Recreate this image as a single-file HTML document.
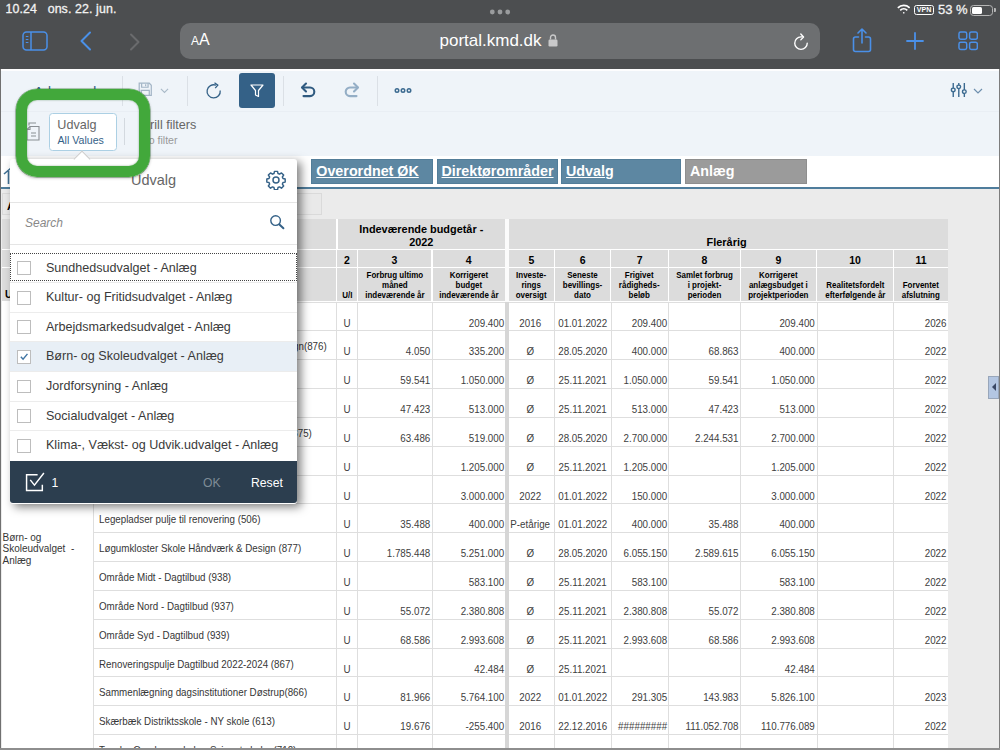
<!DOCTYPE html>
<html lang="da">
<head>
<meta charset="utf-8">
<title>portal.kmd.dk</title>
<style>
*{box-sizing:border-box;margin:0;padding:0}
html,body{width:1000px;height:750px;overflow:hidden;background:#ebebeb;font-family:"Liberation Sans",Arial,sans-serif}
#root{position:relative;width:1000px;height:750px;overflow:hidden;background:#ebebeb}
.abs{position:absolute}
/* browser chrome */
#chrome{position:absolute;left:0;top:0;width:1000px;height:69px;background:#4c4e50;color:#fff}
#status{position:absolute;left:5.5px;top:2px;font-size:12.4px;color:#f2f2f2;letter-spacing:.1px;-webkit-text-stroke:.3px #f2f2f2}
#url{position:absolute;left:180px;top:23px;width:640px;height:36px;border-radius:10px;background:#6d6f71}
#url .aa{position:absolute;left:11px;top:8px;color:#fff;font-size:16px}
#url .aa small{font-size:12px}
#url .host{position:absolute;left:259.5px;top:8.2px;color:#fff;font-size:17px}
/* toolbars */
#tb1{position:absolute;left:0;top:69px;width:1000px;height:43px;background:#eff4f9;border-bottom:1px solid #e9eef4}
#tb2{position:absolute;left:0;top:112px;width:1000px;height:46px;background:#eff4f9}
#white{position:absolute;left:0;top:156px;width:1000px;height:32px;background:#fff}
#blueline{position:absolute;left:0;top:187px;width:1000px;height:2.1px;background:#4f7d9c}
.tab{position:absolute;top:159.2px;height:25px;border:1px solid #527d99;background:#5d87a2;color:#fff;font-weight:bold;font-size:14.3px;line-height:23px;padding-left:4px;text-decoration:underline;white-space:nowrap}
.tab.g{background:#9b9b9b;border-color:#8e8e8e;text-decoration:none}
.vsep{position:absolute;width:1px;background:#dbe0e6}
/* table */
.hd{position:absolute;background:#dcdcdc;color:#000;font-weight:bold;text-align:center;font-size:8.3px;line-height:9.8px;display:flex;align-items:flex-end;justify-content:center;padding-bottom:0.6px}
.hd .lx{display:block;transform:scaleX(.96);transform-origin:center}
.hd.big{font-size:10.9px;line-height:12.5px;align-items:flex-end;padding-bottom:1.2px}
.hd.n{font-size:10.5px;align-items:center;padding-bottom:0;padding-top:4.4px}
.c{position:absolute;height:28.83px;background:#fff;border-top:1px solid #dedede;border-left:1px solid #dedede;font-size:10.3px;color:#404040;white-space:nowrap;overflow:hidden}
.c span{position:absolute;bottom:1.9px;left:0;right:1.5px}
.c span{transform:scaleX(.95);transform-origin:left bottom}
.c.ar span{text-align:right;transform-origin:right bottom}
.c.ac span{text-align:center;right:0;transform-origin:center bottom}
.c.al span{text-align:left;left:5px}
.c.nm span{bottom:6.9px;color:#363636}
/* popup */
#pop{position:absolute;left:10px;top:159px;width:287px;height:344.5px;background:#fff;box-shadow:4px 3px 10px rgba(0,0,0,.5);border-radius:3px;font-family:"Liberation Sans",sans-serif}
#pop .title{position:absolute;left:0;top:0;width:287px;height:44px;border-bottom:1px solid #e5e5e5;text-align:center;line-height:42px;font-size:14.5px;color:#666}
#pop .search{position:absolute;left:0;top:44px;width:287px;height:42px;border-bottom:1px solid #e5e5e5}
#pop .search span{position:absolute;left:15px;top:12.5px;font-style:italic;font-size:12px;color:#888}
.it{position:absolute;left:0;width:287px;height:29.64px;border-bottom:1px solid #ececec;font-size:12.55px;color:#3a3a3a;line-height:29.3px;padding-left:36px;white-space:nowrap}
.it i{position:absolute;left:7.4px;top:7.6px;width:13.8px;height:13.8px;border:1.2px solid #bdbdbd;background:#fff}
.it.sel{background:#e8eff6}
#foot{position:absolute;left:0;top:301.9px;width:287px;height:42.6px;background:#2c3e4f;border-radius:0 0 3px 3px;color:#fff;font-size:12.2px}
</style>
</head>
<body>
<div id="root">

<!-- ===== page content (SAP toolbar) ===== -->
<div id="tb1"></div>
<div id="tb2"></div>
<div id="white"></div>
<div id="blueline"></div>

<!-- tabs -->
<div class="tab" style="left:311.3px;width:121.3px">Overordnet ØK</div>
<div class="tab" style="left:436.5px;width:121px">Direktørområder</div>
<div class="tab" style="left:561px;width:120px">Udvalg</div>
<div class="tab g" style="left:685px;width:122px">Anlæg</div>

<!-- TABLE -->
<div id="table">
<div class="abs" style="left:2px;top:219px;width:946.4px;height:531px;background:#fff"></div>
<div class="hd " style="left:2px;top:219.3px;width:334.3px;height:29.9px;"></div>
<div class="hd big" style="left:337.5px;top:219.3px;width:167.5px;height:29.9px;">Indeværende budgetår -<br>2022</div>
<div class="hd big" style="left:508.8px;top:219.3px;width:439.6px;height:29.9px;padding-right:4px;">Flerårig</div>
<div class="hd n" style="left:2px;top:250.2px;width:90.0px;height:17.2px;"></div>
<div class="hd n" style="left:93px;top:250.2px;width:243.3px;height:17.2px;"></div>
<div class="hd " style="left:2px;top:268.4px;width:90.0px;height:32.8px;"><span style="position:absolute;left:3px;bottom:1px;font-size:10px">Udvalg</span></div>
<div class="hd " style="left:93px;top:268.4px;width:243.3px;height:32.8px;"></div>
<div class="hd n" style="left:337.3px;top:250.2px;width:19.3px;height:17.2px;">2</div>
<div class="hd " style="left:337.3px;top:268.4px;width:19.3px;height:32.8px;"><span class="lx">U/I</span></div>
<div class="hd n" style="left:357.6px;top:250.2px;width:73.9px;height:17.2px;">3</div>
<div class="hd " style="left:357.6px;top:268.4px;width:73.9px;height:32.8px;"><span class="lx">Forbrug ultimo<br>måned<br>indeværende år</span></div>
<div class="hd n" style="left:432.5px;top:250.2px;width:72.5px;height:17.2px;">4</div>
<div class="hd " style="left:432.5px;top:268.4px;width:72.5px;height:32.8px;"><span class="lx">Korrigeret<br>budget<br>indeværende år</span></div>
<div class="hd n" style="left:508.8px;top:250.2px;width:45.1px;height:17.2px;">5</div>
<div class="hd " style="left:508.8px;top:268.4px;width:45.1px;height:32.8px;"><span class="lx">Investe-<br>rings<br>oversigt</span></div>
<div class="hd n" style="left:554.9px;top:250.2px;width:55.4px;height:17.2px;">6</div>
<div class="hd " style="left:554.9px;top:268.4px;width:55.4px;height:32.8px;"><span class="lx">Seneste<br>bevillings-<br>dato</span></div>
<div class="hd n" style="left:611.3px;top:250.2px;width:56.6px;height:17.2px;">7</div>
<div class="hd " style="left:611.3px;top:268.4px;width:56.6px;height:32.8px;"><span class="lx">Frigivet<br>rådigheds-<br>beløb</span></div>
<div class="hd n" style="left:668.9px;top:250.2px;width:71.0px;height:17.2px;">8</div>
<div class="hd " style="left:668.9px;top:268.4px;width:71.0px;height:32.8px;"><span class="lx">Samlet forbrug<br>i projekt-<br>perioden</span></div>
<div class="hd n" style="left:740.9px;top:250.2px;width:75.3px;height:17.2px;">9</div>
<div class="hd " style="left:740.9px;top:268.4px;width:75.3px;height:32.8px;"><span class="lx">Korrigeret<br>anlægsbudget i<br>projektperioden</span></div>
<div class="hd n" style="left:817.2px;top:250.2px;width:75.7px;height:17.2px;">10</div>
<div class="hd " style="left:817.2px;top:268.4px;width:75.7px;height:32.8px;"><span class="lx">Realitetsfordelt<br>efterfølgende år</span></div>
<div class="hd n" style="left:893.9px;top:250.2px;width:54.5px;height:17.2px;">11</div>
<div class="hd " style="left:893.9px;top:268.4px;width:54.5px;height:32.8px;"><span class="lx">Forventet<br>afslutning</span></div>
<div class="abs" style="left:2px;top:193px;width:320px;height:22px;background:#e9e9e9;border:1px solid #dadada;font-weight:bold;font-size:11px;line-height:24px;padding-left:4px;color:#000">Anlæg</div>
<div class="abs" style="left:2px;top:302px;width:91px;height:448px;background:#fff"></div>
<div class="abs" style="left:2.5px;top:531.5px;width:90px;font-size:10px;line-height:11.9px;color:#363636">Børn- og<br>Skoleudvalget&nbsp; -<br>Anlæg</div>
<div class="c al nm" style="left:93px;top:301.6px;width:243.5px"><span></span></div>
<div class="c ac" style="left:336px;top:301.6px;width:21px"><span>U</span></div>
<div class="c ar" style="left:357px;top:301.6px;width:74.80000000000001px"><span></span></div>
<div class="c ar" style="left:431.8px;top:301.6px;width:73.69999999999999px"><span>209.400</span></div>
<div class="c ac" style="left:505px;top:301.6px;width:49.39999999999998px"><span>2016</span></div>
<div class="c ac" style="left:554.4px;top:301.6px;width:56.39999999999998px"><span>01.01.2022</span></div>
<div class="c ar" style="left:610.8px;top:301.6px;width:57.60000000000002px"><span>209.400</span></div>
<div class="c ar" style="left:668.4px;top:301.6px;width:72.0px"><span></span></div>
<div class="c ar" style="left:740.4px;top:301.6px;width:76.30000000000007px"><span>209.400</span></div>
<div class="c ar" style="left:816.7px;top:301.6px;width:76.69999999999993px"><span></span></div>
<div class="c ar" style="left:893.4px;top:301.6px;width:55.0px"><span>2026</span></div>
<div class="c al nm" style="left:93px;top:330.4px;width:243.5px"><span></span><span style="left:auto;right:8.3px;text-align:right">gn(876)</span></div>
<div class="c ac" style="left:336px;top:330.4px;width:21px"><span>U</span></div>
<div class="c ar" style="left:357px;top:330.4px;width:74.80000000000001px"><span>4.050</span></div>
<div class="c ar" style="left:431.8px;top:330.4px;width:73.69999999999999px"><span>335.200</span></div>
<div class="c ac" style="left:505px;top:330.4px;width:49.39999999999998px"><span>Ø</span></div>
<div class="c ac" style="left:554.4px;top:330.4px;width:56.39999999999998px"><span>28.05.2020</span></div>
<div class="c ar" style="left:610.8px;top:330.4px;width:57.60000000000002px"><span>400.000</span></div>
<div class="c ar" style="left:668.4px;top:330.4px;width:72.0px"><span>68.863</span></div>
<div class="c ar" style="left:740.4px;top:330.4px;width:76.30000000000007px"><span>400.000</span></div>
<div class="c ar" style="left:816.7px;top:330.4px;width:76.69999999999993px"><span></span></div>
<div class="c ar" style="left:893.4px;top:330.4px;width:55.0px"><span>2022</span></div>
<div class="c al nm" style="left:93px;top:359.3px;width:243.5px"><span></span></div>
<div class="c ac" style="left:336px;top:359.3px;width:21px"><span>U</span></div>
<div class="c ar" style="left:357px;top:359.3px;width:74.80000000000001px"><span>59.541</span></div>
<div class="c ar" style="left:431.8px;top:359.3px;width:73.69999999999999px"><span>1.050.000</span></div>
<div class="c ac" style="left:505px;top:359.3px;width:49.39999999999998px"><span>Ø</span></div>
<div class="c ac" style="left:554.4px;top:359.3px;width:56.39999999999998px"><span>25.11.2021</span></div>
<div class="c ar" style="left:610.8px;top:359.3px;width:57.60000000000002px"><span>1.050.000</span></div>
<div class="c ar" style="left:668.4px;top:359.3px;width:72.0px"><span>59.541</span></div>
<div class="c ar" style="left:740.4px;top:359.3px;width:76.30000000000007px"><span>1.050.000</span></div>
<div class="c ar" style="left:816.7px;top:359.3px;width:76.69999999999993px"><span></span></div>
<div class="c ar" style="left:893.4px;top:359.3px;width:55.0px"><span>2022</span></div>
<div class="c al nm" style="left:93px;top:388.1px;width:243.5px"><span></span></div>
<div class="c ac" style="left:336px;top:388.1px;width:21px"><span>U</span></div>
<div class="c ar" style="left:357px;top:388.1px;width:74.80000000000001px"><span>47.423</span></div>
<div class="c ar" style="left:431.8px;top:388.1px;width:73.69999999999999px"><span>513.000</span></div>
<div class="c ac" style="left:505px;top:388.1px;width:49.39999999999998px"><span>Ø</span></div>
<div class="c ac" style="left:554.4px;top:388.1px;width:56.39999999999998px"><span>25.11.2021</span></div>
<div class="c ar" style="left:610.8px;top:388.1px;width:57.60000000000002px"><span>513.000</span></div>
<div class="c ar" style="left:668.4px;top:388.1px;width:72.0px"><span>47.423</span></div>
<div class="c ar" style="left:740.4px;top:388.1px;width:76.30000000000007px"><span>513.000</span></div>
<div class="c ar" style="left:816.7px;top:388.1px;width:76.69999999999993px"><span></span></div>
<div class="c ar" style="left:893.4px;top:388.1px;width:55.0px"><span>2022</span></div>
<div class="c al nm" style="left:93px;top:416.9px;width:243.5px"><span></span><span style="left:auto;right:23.6px;text-align:right">(875)</span></div>
<div class="c ac" style="left:336px;top:416.9px;width:21px"><span>U</span></div>
<div class="c ar" style="left:357px;top:416.9px;width:74.80000000000001px"><span>63.486</span></div>
<div class="c ar" style="left:431.8px;top:416.9px;width:73.69999999999999px"><span>519.000</span></div>
<div class="c ac" style="left:505px;top:416.9px;width:49.39999999999998px"><span>Ø</span></div>
<div class="c ac" style="left:554.4px;top:416.9px;width:56.39999999999998px"><span>28.05.2020</span></div>
<div class="c ar" style="left:610.8px;top:416.9px;width:57.60000000000002px"><span>2.700.000</span></div>
<div class="c ar" style="left:668.4px;top:416.9px;width:72.0px"><span>2.244.531</span></div>
<div class="c ar" style="left:740.4px;top:416.9px;width:76.30000000000007px"><span>2.700.000</span></div>
<div class="c ar" style="left:816.7px;top:416.9px;width:76.69999999999993px"><span></span></div>
<div class="c ar" style="left:893.4px;top:416.9px;width:55.0px"><span>2022</span></div>
<div class="c al nm" style="left:93px;top:445.8px;width:243.5px"><span></span></div>
<div class="c ac" style="left:336px;top:445.8px;width:21px"><span>U</span></div>
<div class="c ar" style="left:357px;top:445.8px;width:74.80000000000001px"><span></span></div>
<div class="c ar" style="left:431.8px;top:445.8px;width:73.69999999999999px"><span>1.205.000</span></div>
<div class="c ac" style="left:505px;top:445.8px;width:49.39999999999998px"><span>Ø</span></div>
<div class="c ac" style="left:554.4px;top:445.8px;width:56.39999999999998px"><span>25.11.2021</span></div>
<div class="c ar" style="left:610.8px;top:445.8px;width:57.60000000000002px"><span>1.205.000</span></div>
<div class="c ar" style="left:668.4px;top:445.8px;width:72.0px"><span></span></div>
<div class="c ar" style="left:740.4px;top:445.8px;width:76.30000000000007px"><span>1.205.000</span></div>
<div class="c ar" style="left:816.7px;top:445.8px;width:76.69999999999993px"><span></span></div>
<div class="c ar" style="left:893.4px;top:445.8px;width:55.0px"><span>2022</span></div>
<div class="c al nm" style="left:93px;top:474.6px;width:243.5px"><span></span></div>
<div class="c ac" style="left:336px;top:474.6px;width:21px"><span>U</span></div>
<div class="c ar" style="left:357px;top:474.6px;width:74.80000000000001px"><span></span></div>
<div class="c ar" style="left:431.8px;top:474.6px;width:73.69999999999999px"><span>3.000.000</span></div>
<div class="c ac" style="left:505px;top:474.6px;width:49.39999999999998px"><span>2022</span></div>
<div class="c ac" style="left:554.4px;top:474.6px;width:56.39999999999998px"><span>01.01.2022</span></div>
<div class="c ar" style="left:610.8px;top:474.6px;width:57.60000000000002px"><span>150.000</span></div>
<div class="c ar" style="left:668.4px;top:474.6px;width:72.0px"><span></span></div>
<div class="c ar" style="left:740.4px;top:474.6px;width:76.30000000000007px"><span>3.000.000</span></div>
<div class="c ar" style="left:816.7px;top:474.6px;width:76.69999999999993px"><span></span></div>
<div class="c ar" style="left:893.4px;top:474.6px;width:55.0px"><span>2022</span></div>
<div class="c al nm" style="left:93px;top:503.4px;width:243.5px"><span>Legepladser pulje til renovering (506)</span></div>
<div class="c ac" style="left:336px;top:503.4px;width:21px"><span>U</span></div>
<div class="c ar" style="left:357px;top:503.4px;width:74.80000000000001px"><span>35.488</span></div>
<div class="c ar" style="left:431.8px;top:503.4px;width:73.69999999999999px"><span>400.000</span></div>
<div class="c ac" style="left:505px;top:503.4px;width:49.39999999999998px"><span>P-etårige</span></div>
<div class="c ac" style="left:554.4px;top:503.4px;width:56.39999999999998px"><span>01.01.2022</span></div>
<div class="c ar" style="left:610.8px;top:503.4px;width:57.60000000000002px"><span>400.000</span></div>
<div class="c ar" style="left:668.4px;top:503.4px;width:72.0px"><span>35.488</span></div>
<div class="c ar" style="left:740.4px;top:503.4px;width:76.30000000000007px"><span>400.000</span></div>
<div class="c ar" style="left:816.7px;top:503.4px;width:76.69999999999993px"><span></span></div>
<div class="c ar" style="left:893.4px;top:503.4px;width:55.0px"><span></span></div>
<div class="c al nm" style="left:93px;top:532.2px;width:243.5px"><span>Løgumkloster Skole Håndværk &amp; Design (877)</span></div>
<div class="c ac" style="left:336px;top:532.2px;width:21px"><span>U</span></div>
<div class="c ar" style="left:357px;top:532.2px;width:74.80000000000001px"><span>1.785.448</span></div>
<div class="c ar" style="left:431.8px;top:532.2px;width:73.69999999999999px"><span>5.251.000</span></div>
<div class="c ac" style="left:505px;top:532.2px;width:49.39999999999998px"><span>Ø</span></div>
<div class="c ac" style="left:554.4px;top:532.2px;width:56.39999999999998px"><span>28.05.2020</span></div>
<div class="c ar" style="left:610.8px;top:532.2px;width:57.60000000000002px"><span>6.055.150</span></div>
<div class="c ar" style="left:668.4px;top:532.2px;width:72.0px"><span>2.589.615</span></div>
<div class="c ar" style="left:740.4px;top:532.2px;width:76.30000000000007px"><span>6.055.150</span></div>
<div class="c ar" style="left:816.7px;top:532.2px;width:76.69999999999993px"><span></span></div>
<div class="c ar" style="left:893.4px;top:532.2px;width:55.0px"><span>2022</span></div>
<div class="c al nm" style="left:93px;top:561.1px;width:243.5px"><span>Område Midt - Dagtilbud (938)</span></div>
<div class="c ac" style="left:336px;top:561.1px;width:21px"><span>U</span></div>
<div class="c ar" style="left:357px;top:561.1px;width:74.80000000000001px"><span></span></div>
<div class="c ar" style="left:431.8px;top:561.1px;width:73.69999999999999px"><span>583.100</span></div>
<div class="c ac" style="left:505px;top:561.1px;width:49.39999999999998px"><span>Ø</span></div>
<div class="c ac" style="left:554.4px;top:561.1px;width:56.39999999999998px"><span>25.11.2021</span></div>
<div class="c ar" style="left:610.8px;top:561.1px;width:57.60000000000002px"><span>583.100</span></div>
<div class="c ar" style="left:668.4px;top:561.1px;width:72.0px"><span></span></div>
<div class="c ar" style="left:740.4px;top:561.1px;width:76.30000000000007px"><span>583.100</span></div>
<div class="c ar" style="left:816.7px;top:561.1px;width:76.69999999999993px"><span></span></div>
<div class="c ar" style="left:893.4px;top:561.1px;width:55.0px"><span>2022</span></div>
<div class="c al nm" style="left:93px;top:589.9px;width:243.5px"><span>Område Nord - Dagtilbud (937)</span></div>
<div class="c ac" style="left:336px;top:589.9px;width:21px"><span>U</span></div>
<div class="c ar" style="left:357px;top:589.9px;width:74.80000000000001px"><span>55.072</span></div>
<div class="c ar" style="left:431.8px;top:589.9px;width:73.69999999999999px"><span>2.380.808</span></div>
<div class="c ac" style="left:505px;top:589.9px;width:49.39999999999998px"><span>Ø</span></div>
<div class="c ac" style="left:554.4px;top:589.9px;width:56.39999999999998px"><span>25.11.2021</span></div>
<div class="c ar" style="left:610.8px;top:589.9px;width:57.60000000000002px"><span>2.380.808</span></div>
<div class="c ar" style="left:668.4px;top:589.9px;width:72.0px"><span>55.072</span></div>
<div class="c ar" style="left:740.4px;top:589.9px;width:76.30000000000007px"><span>2.380.808</span></div>
<div class="c ar" style="left:816.7px;top:589.9px;width:76.69999999999993px"><span></span></div>
<div class="c ar" style="left:893.4px;top:589.9px;width:55.0px"><span>2022</span></div>
<div class="c al nm" style="left:93px;top:618.7px;width:243.5px"><span>Område Syd - Dagtilbud (939)</span></div>
<div class="c ac" style="left:336px;top:618.7px;width:21px"><span>U</span></div>
<div class="c ar" style="left:357px;top:618.7px;width:74.80000000000001px"><span>68.586</span></div>
<div class="c ar" style="left:431.8px;top:618.7px;width:73.69999999999999px"><span>2.993.608</span></div>
<div class="c ac" style="left:505px;top:618.7px;width:49.39999999999998px"><span>Ø</span></div>
<div class="c ac" style="left:554.4px;top:618.7px;width:56.39999999999998px"><span>25.11.2021</span></div>
<div class="c ar" style="left:610.8px;top:618.7px;width:57.60000000000002px"><span>2.993.608</span></div>
<div class="c ar" style="left:668.4px;top:618.7px;width:72.0px"><span>68.586</span></div>
<div class="c ar" style="left:740.4px;top:618.7px;width:76.30000000000007px"><span>2.993.608</span></div>
<div class="c ar" style="left:816.7px;top:618.7px;width:76.69999999999993px"><span></span></div>
<div class="c ar" style="left:893.4px;top:618.7px;width:55.0px"><span>2022</span></div>
<div class="c al nm" style="left:93px;top:647.6px;width:243.5px"><span>Renoveringspulje Dagtilbud 2022-2024 (867)</span></div>
<div class="c ac" style="left:336px;top:647.6px;width:21px"><span>U</span></div>
<div class="c ar" style="left:357px;top:647.6px;width:74.80000000000001px"><span></span></div>
<div class="c ar" style="left:431.8px;top:647.6px;width:73.69999999999999px"><span>42.484</span></div>
<div class="c ac" style="left:505px;top:647.6px;width:49.39999999999998px"><span>Ø</span></div>
<div class="c ac" style="left:554.4px;top:647.6px;width:56.39999999999998px"><span>25.11.2021</span></div>
<div class="c ar" style="left:610.8px;top:647.6px;width:57.60000000000002px"><span></span></div>
<div class="c ar" style="left:668.4px;top:647.6px;width:72.0px"><span></span></div>
<div class="c ar" style="left:740.4px;top:647.6px;width:76.30000000000007px"><span>42.484</span></div>
<div class="c ar" style="left:816.7px;top:647.6px;width:76.69999999999993px"><span></span></div>
<div class="c ar" style="left:893.4px;top:647.6px;width:55.0px"><span></span></div>
<div class="c al nm" style="left:93px;top:676.4px;width:243.5px"><span>Sammenlægning dagsinstitutioner Døstrup(866)</span></div>
<div class="c ac" style="left:336px;top:676.4px;width:21px"><span>U</span></div>
<div class="c ar" style="left:357px;top:676.4px;width:74.80000000000001px"><span>81.966</span></div>
<div class="c ar" style="left:431.8px;top:676.4px;width:73.69999999999999px"><span>5.764.100</span></div>
<div class="c ac" style="left:505px;top:676.4px;width:49.39999999999998px"><span>2022</span></div>
<div class="c ac" style="left:554.4px;top:676.4px;width:56.39999999999998px"><span>01.01.2022</span></div>
<div class="c ar" style="left:610.8px;top:676.4px;width:57.60000000000002px"><span>291.305</span></div>
<div class="c ar" style="left:668.4px;top:676.4px;width:72.0px"><span>143.983</span></div>
<div class="c ar" style="left:740.4px;top:676.4px;width:76.30000000000007px"><span>5.826.100</span></div>
<div class="c ar" style="left:816.7px;top:676.4px;width:76.69999999999993px"><span></span></div>
<div class="c ar" style="left:893.4px;top:676.4px;width:55.0px"><span>2023</span></div>
<div class="c al nm" style="left:93px;top:705.2px;width:243.5px"><span>Skærbæk Distriktsskole - NY skole (613)</span></div>
<div class="c ac" style="left:336px;top:705.2px;width:21px"><span>U</span></div>
<div class="c ar" style="left:357px;top:705.2px;width:74.80000000000001px"><span>19.676</span></div>
<div class="c ar" style="left:431.8px;top:705.2px;width:73.69999999999999px"><span>-255.400</span></div>
<div class="c ac" style="left:505px;top:705.2px;width:49.39999999999998px"><span>2016</span></div>
<div class="c ac" style="left:554.4px;top:705.2px;width:56.39999999999998px"><span>22.12.2016</span></div>
<div class="c ar" style="left:610.8px;top:705.2px;width:57.60000000000002px"><span>#########</span></div>
<div class="c ar" style="left:668.4px;top:705.2px;width:72.0px"><span>111.052.708</span></div>
<div class="c ar" style="left:740.4px;top:705.2px;width:76.30000000000007px"><span>110.776.089</span></div>
<div class="c ar" style="left:816.7px;top:705.2px;width:76.69999999999993px"><span></span></div>
<div class="c ar" style="left:893.4px;top:705.2px;width:55.0px"><span>2022</span></div>
<div class="c al nm" style="left:93px;top:734.0px;width:243.5px"><span>Tønder Overbygn.skole - Svinget skolen(712)</span></div>
<div class="c ac" style="left:336px;top:734.0px;width:21px"><span></span></div>
<div class="c ar" style="left:357px;top:734.0px;width:74.80000000000001px"><span></span></div>
<div class="c ar" style="left:431.8px;top:734.0px;width:73.69999999999999px"><span></span></div>
<div class="c ac" style="left:505px;top:734.0px;width:49.39999999999998px"><span></span></div>
<div class="c ac" style="left:554.4px;top:734.0px;width:56.39999999999998px"><span></span></div>
<div class="c ar" style="left:610.8px;top:734.0px;width:57.60000000000002px"><span></span></div>
<div class="c ar" style="left:668.4px;top:734.0px;width:72.0px"><span></span></div>
<div class="c ar" style="left:740.4px;top:734.0px;width:76.30000000000007px"><span></span></div>
<div class="c ar" style="left:816.7px;top:734.0px;width:76.69999999999993px"><span></span></div>
<div class="c ar" style="left:893.4px;top:734.0px;width:55.0px"><span></span></div>
<div class="abs" style="left:505.3px;top:219px;width:3.5px;height:531px;background:#d6d6d6"></div>
<div class="abs" style="left:505.3px;top:219px;width:3.5px;height:83px;background:#fbfbfb"></div>
<div class="abs" style="left:948.3px;top:219px;width:51px;height:531px;background:#ebebeb"></div>
<div class="abs" style="left:988px;top:375.5px;width:11px;height:23px;background:#b3c6e2;border:1px solid #98a6ba"></div><div class="abs" style="left:991.5px;top:383px;width:0;height:0;border-top:4px solid transparent;border-bottom:4px solid transparent;border-right:4.5px solid #3a4865"></div>
</div>

<!-- right scrollbar-ish area -->


<!-- ===== toolbar icons ===== -->
<div class="abs" style="left:0;top:69px;width:1000px;height:1.6px;background:#fdfdfe"></div>
<div class="abs" style="left:34px;top:84px;font-size:14px;color:#346187;white-space:nowrap">Advanced ‹</div>
<div class="vsep" style="left:122px;top:76px;height:30px"></div>
<!-- save icon -->
<svg class="abs" style="left:137.5px;top:82.3px" width="14.5" height="14.5" viewBox="0 0 18 18" fill="none" stroke="#a3b5c6" stroke-width="1.5"><path d="M1.5 1.5h12.5l2.500 2.500v12.500h-15z"/><path d="M4.500 1.500v5h8v-5"/><path d="M9.500 2.800v2.400"/><path d="M4 16.500v-6h10v6"/></svg>
<svg class="abs" style="left:159.5px;top:88px" width="9" height="6.3" viewBox="0 0 10 7" fill="none" stroke="#a9b9c8" stroke-width="1.2"><path d="M1 1l4 4 4-4"/></svg>
<div class="vsep" style="left:187px;top:76px;height:30px"></div>
<!-- refresh -->
<svg class="abs" style="left:204.6px;top:81.6px" width="18" height="19" viewBox="0 0 18 19" fill="none" stroke="#346187" stroke-width="1.3"><path d="M15.200 8.500a6.600 6.600 0 1 1-4.200-5.300"/><path d="M9.500 0.800l3.300 2.400-2.600 2.900" /></svg>
<!-- filter button -->
<div class="abs" style="left:239px;top:73px;width:36px;height:35px;background:#346187;border-radius:3px"></div>
<svg class="abs" style="left:249px;top:83px" width="16" height="16" viewBox="0 0 16 16" fill="none" stroke="#fff" stroke-width="1.2" stroke-linejoin="round"><path d="M2 2h12l-4.500 5.500v6l-3-1.500v-4.500z"/></svg>
<div class="vsep" style="left:283px;top:76px;height:30px"></div>
<!-- undo -->
<svg class="abs" style="left:300px;top:82px" width="17" height="16" viewBox="0 0 17 16" fill="none" stroke="#2f5a80" stroke-width="2.1" stroke-linecap="round" stroke-linejoin="round"><path d="M6 1.500l-4 4 4 4"/><path d="M2.500 5.500h7.500a4.300 4.300 0 0 1 0 8.600h-6.500"/></svg>
<!-- redo -->
<svg class="abs" style="left:343px;top:82px" width="17" height="16" viewBox="0 0 17 16" fill="none" stroke="#94aec6" stroke-width="2.1" stroke-linecap="round" stroke-linejoin="round"><path d="M11 1.500l4 4-4 4"/><path d="M14.500 5.500h-7.500a4.300 4.300 0 0 0 0 8.600h6.500"/></svg>
<div class="vsep" style="left:377px;top:76px;height:30px"></div>
<!-- more -->
<svg class="abs" style="left:394px;top:86.5px" width="18" height="7" viewBox="0 0 18 7" fill="none" stroke="#3b6a90" stroke-width="1.5"><circle cx="3" cy="3.5" r="1.75"/><circle cx="9" cy="3.5" r="1.75"/><circle cx="15" cy="3.5" r="1.75"/></svg>
<!-- settings sliders right -->
<svg class="abs" style="left:949.5px;top:81.8px" width="18.5" height="15.8" viewBox="0 0 20 18" preserveAspectRatio="none" fill="none" stroke="#3b6a90" stroke-width="1.5"><path d="M3.500 1v6M3.500 11v6M9.500 1v2.500M9.500 7.500v9.500M15.500 1v8M15.500 13v4"/><circle cx="3.500" cy="9" r="2"/><circle cx="9.500" cy="5.500" r="2"/><circle cx="15.500" cy="11" r="2"/></svg>
<svg class="abs" style="left:973px;top:87.5px" width="10" height="7" viewBox="0 0 10 7" fill="none" stroke="#6e8fae" stroke-width="1.200"><path d="M1 1l4 4 4-4"/></svg>

<!-- second toolbar -->
<svg class="abs" style="left:26px;top:122px" width="14" height="19" viewBox="0 0 14 19" fill="none" stroke="#8a8f94" stroke-width="1.100"><path d="M3 3.500v-2.500h7"/><path d="M1 7.500l3-3h9v13.500h-12z"/><path d="M4 4.500v3h-3"/><path d="M5 11h5M5 14h5"/></svg>
<div class="abs" style="left:49px;top:113px;width:68px;height:38px;background:#fff;border:1.3px solid #acd0e4;border-radius:3.5px"></div>
<div class="abs" style="left:57.3px;top:117.5px;font-size:12.6px;color:#666;white-space:nowrap">Udvalg</div>
<div class="abs" style="left:57.500px;top:134px;font-size:10.600px;color:#346187;white-space:nowrap">All Values</div>
<div class="vsep" style="left:124px;top:118px;height:27px;background:#d3d9df"></div>
<div class="abs" style="left:141px;top:117.5px;font-size:12.6px;color:#666;white-space:nowrap">Drill filters</div>
<div class="abs" style="left:141px;top:134px;font-size:10.600px;color:#999;white-space:nowrap">No filter</div>
<!-- home icon bit at left -->
<svg class="abs" style="left:3px;top:164.5px" width="10" height="20" viewBox="0 0 10 20" fill="none" stroke="#3f6f93" stroke-width="1.600"><path d="M1 9l7-6M5.500 6v13"/></svg>


<!-- ===== popup ===== -->
<div id="pop">
<!-- arrow -->
<div class="abs" style="left:66px;top:-6px;width:12px;height:12px;background:#fff;transform:rotate(45deg);border-left:1px solid #ccc;border-top:1px solid #ccc"></div>
<div class="title">Udvalg</div>
<svg class="abs" style="left:256px;top:10.8px" width="20" height="20" viewBox="0 0 22 22" fill="none" stroke="#346187" stroke-width="1.6" stroke-linejoin="round"><circle cx="11" cy="11" r="3.3"/><path d="M9.300 1.500h3.400l.5 2.400 1.700.7 2.100-1.400 2.400 2.400-1.400 2.100.7 1.700 2.400.5v3.400l-2.400.5-.7 1.700 1.400 2.100-2.400 2.400-2.100-1.400-1.700.7-.5 2.400h-3.400l-.5-2.400-1.700-.7-2.100 1.400-2.400-2.400 1.400-2.100-.7-1.700-2.400-.5v-3.400l2.400-.5.7-1.700-1.400-2.100 2.400-2.400 2.100 1.400 1.700-.7z"/></svg>
<div class="search"><span>Search</span>
<svg class="abs" style="left:259px;top:10.5px" width="17" height="17" viewBox="0 0 17 17" fill="none" stroke="#346187" stroke-width="1.4" stroke-linecap="round"><circle cx="6.6" cy="6.6" r="4.8"/><path d="M10.4 10.4l4 3.8" stroke-width="2"/></svg>
</div>
<div class="it" style="top:94.50px"><b class="abs" style="left:0;top:-0.8px;width:287px;height:27.8px;border:1px dotted #444"></b><i></i>Sundhedsudvalget - Anlæg</div>
<div class="it" style="top:124.14px"><i></i>Kultur- og Fritidsudvalget - Anlæg</div>
<div class="it" style="top:153.78px"><i></i>Arbejdsmarkedsudvalget - Anlæg</div>
<div class="it sel" style="top:183.42px"><i></i><svg class="abs" style="left:10.3px;top:10.8px" width="8.3" height="7.5" viewBox="0 0 10 9" fill="none" stroke="#3f74a3" stroke-width="1.7"><path d="M1 4.500l2.700 3 5.300-6.500"/></svg>Børn- og Skoleudvalget - Anlæg</div>
<div class="it" style="top:213.06px"><i></i>Jordforsyning - Anlæg</div>
<div class="it" style="top:242.70px"><i></i>Socialudvalget - Anlæg</div>
<div class="it" style="top:272.34px;border-bottom:none"><i></i>Klima-, Vækst- og Udvik.udvalget - Anlæg</div>
<div id="foot">
<svg class="abs" style="left:15px;top:11.5px" width="21" height="20" viewBox="0 0 20 19" fill="none" stroke="#fff" stroke-width="1.400"><path d="M12 2.500h-10.500v15h15v-5.500"/><path d="M5 7.500l4 5 9-11.500"/></svg>
<span class="abs" style="left:41.5px;top:15.5px">1</span>
<span class="abs" style="left:193px;top:15.5px;color:#7f8c97">OK</span>
<span class="abs" style="left:241px;top:15.5px">Reset</span>
</div>
</div>


<!-- ===== green highlight ===== -->
<div class="abs" style="left:16.2px;top:89px;width:133.7px;height:88px;border:11.9px solid #42a83b;border-radius:21px;box-shadow:0 1px 3px rgba(0,0,0,.3),inset 0 0 2px rgba(0,70,0,.45),0 0 0 .5px rgba(30,110,30,.6)"></div>

<!-- ===== browser chrome ===== -->
<div id="chrome">
<div id="status">10.24&nbsp;&nbsp; ons. 22. jun.</div>
<!-- center dots -->
<svg class="abs" style="left:489px;top:8.5px" width="22" height="6" viewBox="0 0 22 6"><circle cx="3.3" cy="3" r="2.4" fill="#9a9c9e"/><circle cx="11" cy="3" r="2.4" fill="#9a9c9e"/><circle cx="18.7" cy="3" r="2.4" fill="#9a9c9e"/></svg>
<!-- wifi -->
<svg class="abs" style="left:896.5px;top:4.3px" width="13.5" height="10.2" viewBox="0 0 16 12" fill="none" stroke="#fff" stroke-width="2" stroke-linecap="butt"><path d="M1 4.500a10 10 0 0 1 14 0"/><path d="M3.800 7.500a6 6 0 0 1 8.400 0"/><circle cx="8" cy="10.300" r="1" fill="#fff" stroke="none"/></svg>
<!-- vpn -->
<div class="abs" style="left:914px;top:5px;width:20px;height:10px;border:1px solid #fff;border-radius:2.500px;font-size:7px;font-weight:bold;line-height:8px;text-align:center;color:#fff">VPN</div>
<div class="abs" style="left:938px;top:2px;font-size:13px;color:#f2f2f2;white-space:nowrap;-webkit-text-stroke:.3px #f2f2f2">53 %</div>
<!-- battery -->
<div class="abs" style="left:970px;top:4.5px;width:22.5px;height:11px;border:1px solid #b5b5b5;border-radius:3.500px"></div>
<div class="abs" style="left:972px;top:6.5px;width:10px;height:7px;background:#fff;border-radius:1.500px"></div>
<div class="abs" style="left:993.5px;top:8px;width:2px;height:4px;background:#b5b5b5;border-radius:0 1px 1px 0"></div>
<!-- sidebar icon -->
<svg class="abs" style="left:22px;top:31px" width="26" height="20" viewBox="0 0 26 20" fill="none" stroke="#4a90e8" stroke-width="1.500"><rect x="1" y="1" width="24" height="18" rx="3.500"/><path d="M9 1v18"/><path d="M3.800 5.500h2.600M3.800 8.500h2.600M3.800 11.500h2.600" stroke-width="1.200"/></svg>
<!-- back / forward -->
<svg class="abs" style="left:80px;top:31px" width="12" height="20" viewBox="0 0 12 20" fill="none" stroke="#4a90e8" stroke-width="2" stroke-linecap="round" stroke-linejoin="round"><path d="M10 1.500l-8.500 8.500 8.500 8.500"/></svg>
<svg class="abs" style="left:129px;top:32.5px" width="12" height="18" viewBox="0 0 12 18" fill="none" stroke="#6a6b6d" stroke-width="2" stroke-linecap="round" stroke-linejoin="round"><path d="M2 1.500l7.500 7.500-7.500 7.500"/></svg>
<!-- url bar -->
<div id="url">
<div class="aa"><small>A</small>A</div>
<div class="host">portal.kmd.dk</div>
<svg class="abs" style="left:368px;top:11px" width="10" height="13" viewBox="0 0 10 13"><rect x="0.500" y="5.500" width="9" height="7" rx="1.200" fill="#c9c9ca"/><path d="M2.500 5.500v-2a2.500 2.500 0 0 1 5 0v2" fill="none" stroke="#c9c9ca" stroke-width="1.400"/></svg>
<svg class="abs" style="left:613px;top:9.5px" width="16.5" height="18.5" viewBox="0 0 18 20" fill="none" stroke="#fff" stroke-width="1.500" stroke-linecap="round"><path d="M15.500 11a6.800 6.800 0 1 1-6.800-6.800h2"/><path d="M8.500 1l3 3.200-3 3.200" stroke-linejoin="round"/></svg>
</div>
<!-- share -->
<svg class="abs" style="left:852px;top:28.3px" width="20" height="25" viewBox="0 0 20 25" fill="none" stroke="#4a90e8" stroke-width="1.600" stroke-linecap="round" stroke-linejoin="round"><path d="M6.500 9h-3a2 2 0 0 0-2 2v10.500a2 2 0 0 0 2 2h13a2 2 0 0 0 2-2v-10.500a2 2 0 0 0-2-2h-3"/><path d="M10 15v-13.500M6 5l4-4 4 4"/></svg>
<!-- plus -->
<svg class="abs" style="left:905.8px;top:32.3px" width="18" height="18" viewBox="0 0 18 18" fill="none" stroke="#4a90e8" stroke-width="1.800" stroke-linecap="round"><path d="M9 1v16M1 9h16"/></svg>
<!-- tabs grid -->
<svg class="abs" style="left:958px;top:31.3px" width="20.3" height="19.6" viewBox="0 0 21 20" fill="none" stroke="#4a90e8" stroke-width="1.500"><rect x="1" y="1" width="8" height="7.500" rx="1.800"/><rect x="12" y="1" width="8" height="7.500" rx="1.800"/><rect x="1" y="11.500" width="8" height="7.500" rx="1.800"/><rect x="12" y="11.500" width="8" height="7.500" rx="1.800"/></svg>

</div>

<!-- page frame -->
<div class="abs" style="left:999px;top:69px;width:1px;height:681px;background:#7d7d7d"></div>
<div class="abs" style="left:0;top:69px;width:1.2px;height:681px;background:#707070"></div>
<div class="abs" style="left:0;top:748px;width:1000px;height:2px;background:#8e8e8e"></div>
</div>
</body>
</html>
